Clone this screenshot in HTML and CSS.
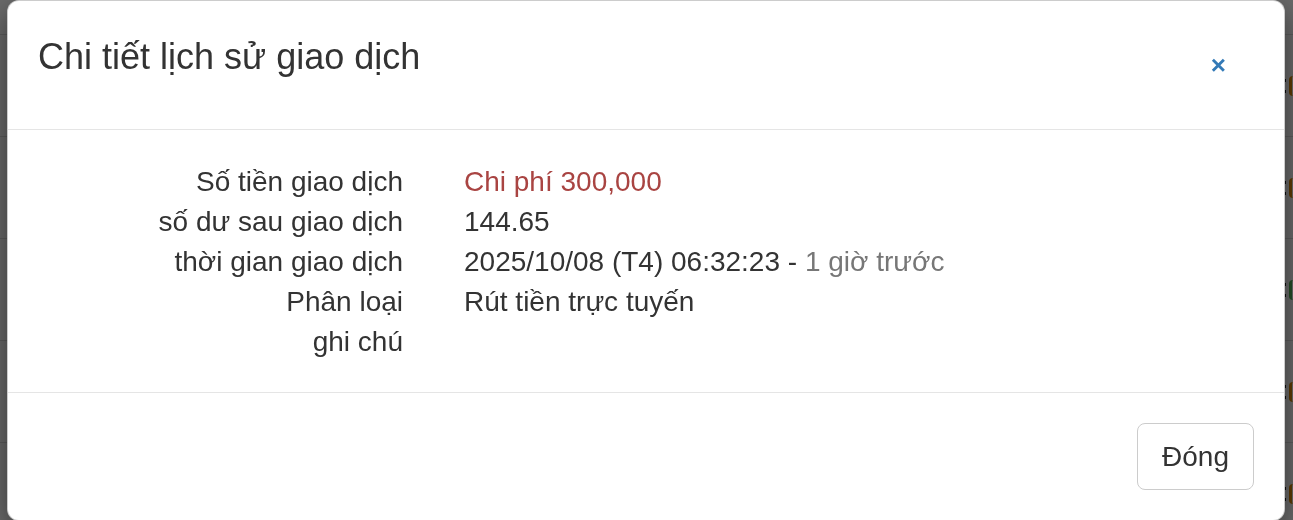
FILE: index.html
```html
<!DOCTYPE html>
<html lang="vi">
<head>
  <meta charset="UTF-8" />
  <meta name="viewport" content="width=device-width, initial-scale=1.0"/>
  <title>Chi tiết lịch sử giao dịch</title>
  <link rel="stylesheet" href="styles.css">
</head>
<body>
  <div class="page">
    <div class="topbar"><div class="topbar-brand"></div></div>
    <div class="history-row"><span class="colon"></span><span class="digit"></span></div>
    <div class="history-row"><span class="colon"></span><span class="digit"></span></div>
    <div class="history-row"><span class="colon"></span><span class="digit green"></span></div>
    <div class="history-row"><span class="colon"></span><span class="digit"></span></div>
    <div class="history-row"><span class="colon"></span><span class="digit"></span></div>
  </div>

  <div class="backdrop"></div>

  <div class="modal">
    <div class="modal-header">
      <h4 class="modal-title">Chi tiết lịch sử giao dịch</h4>
      <a href="#" class="close">&times;</a>
    </div>

    <div class="modal-body">
      <dl class="detail">
        <dt>Số tiền giao dịch</dt>
        <dd class="text-danger">Chi phí 300,000</dd>
        <dt>số dư sau giao dịch</dt>
        <dd>144.65</dd>
        <dt>thời gian giao dịch</dt>
        <dd>2025/10/08 (T4) 06:32:23 - <span class="text-muted">1 giờ trước</span></dd>
        <dt>Phân loại</dt>
        <dd>Rút tiền trực tuyến</dd>
        <dt>ghi chú</dt>
        <dd></dd>
      </dl>
    </div>

    <div class="modal-footer">
      <button type="button" class="btn">Đóng</button>
    </div>
  </div>
</body>
</html>
```

FILE: styles.css
```css
body {
  font-family: "Liberation Sans", Arial, Helvetica, sans-serif;
  font-size: 28px;
  color: #333;
  margin: 0;
  padding: 0;
  background: #fff;
  overflow: hidden;
}
.page {
  width: 1293px;
}
.topbar {
  height: 34px;
  border-bottom: 1px solid #ddd;
}
.topbar-brand {
  margin-left: 296px;
  width: 600px;
  height: 2px;
  background-color: #1b5563;
}
.history-row {
  height: 101px;
  border-bottom: 1px solid #ddd;
  display: flex;
  align-items: center;
  gap: 3px;
  padding-left: 1285px;
}
.colon {
  width: 3px;
  height: 14px;
  background: linear-gradient(#222 0 3px, transparent 3px 11px, #222 11px);
}
.digit {
  width: 4px;
  height: 20px;
  border-left: 3px solid #e08e0b;
  border-radius: 10px 0 0 10px;
}
.digit.green {
  border-left-color: #5cb85c;
}
.backdrop {
  position: fixed;
  inset: 0;
  background-color: rgba(0, 0, 0, 0.58);
}
.modal {
  position: absolute;
  left: 7px;
  top: 0;
  width: 1278px;
  box-sizing: border-box;
  background-color: #fff;
  border: 1px solid rgba(0, 0, 0, 0.2);
  border-radius: 12px;
  box-shadow: 0 10px 30px rgba(0, 0, 0, 0.5);
}
.modal-header {
  display: flex;
  justify-content: space-between;
  align-items: flex-start;
  padding: 30px 30px 46px;
  border-bottom: 1px solid #e5e5e5;
}
.modal-title {
  margin: 0;
  font-size: 36px;
  font-weight: normal;
  line-height: 52px;
  color: #333;
}
.close {
  margin: 20px 28px 0 0;
  font-size: 26px;
  font-weight: bold;
  line-height: 28px;
  color: #337ab7;
  text-decoration: none;
}
.modal-body {
  padding: 32px 30px 30px;
}
.detail {
  display: grid;
  grid-template-columns: 365px 1fr;
  column-gap: 61px;
  margin: 0;
  line-height: 40px;
}
.detail dt {
  text-align: right;
  font-weight: normal;
}
.detail dd {
  margin: 0;
  min-height: 40px;
}
.text-danger {
  color: #a94442;
}
.text-muted {
  color: #777;
}
.modal-footer {
  padding: 30px;
  border-top: 1px solid #e5e5e5;
  text-align: right;
}
.btn {
  font-family: inherit;
  font-size: 28px;
  line-height: 40px;
  padding: 13px 24px 12px;
  color: #333;
  background-color: #fff;
  border: 1px solid #ccc;
  border-radius: 8px;
  cursor: pointer;
}
```
